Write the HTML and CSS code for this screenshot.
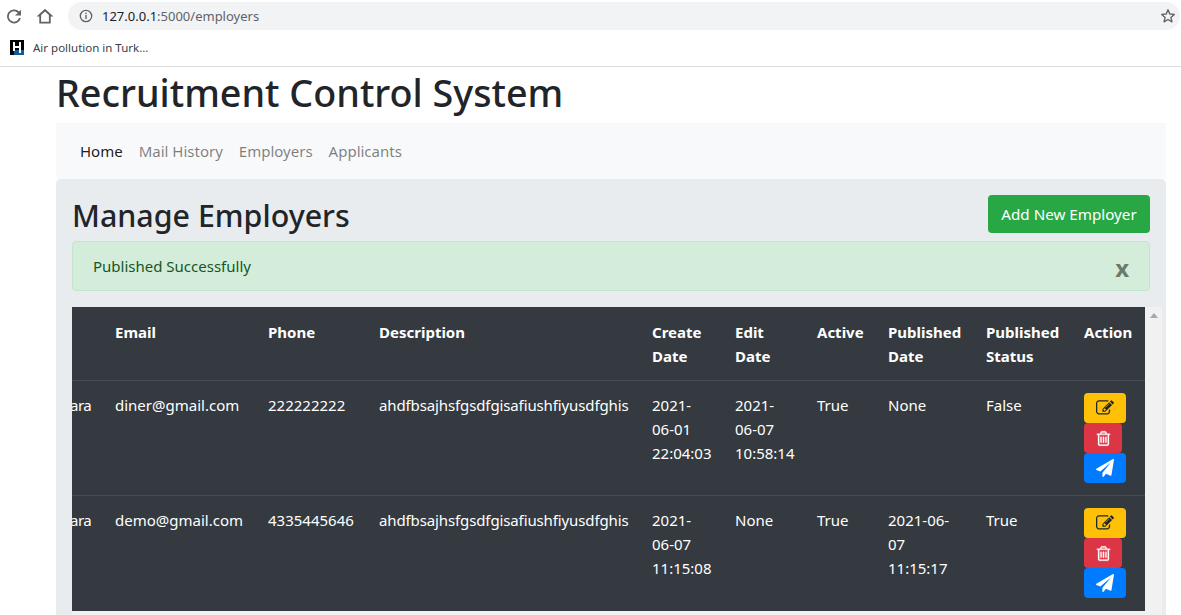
FILE: index.html
```html
<!DOCTYPE html>
<html lang="en">
<head>
<meta charset="utf-8">
<title>Recruitment Control System</title>
<link rel="stylesheet" href="styles.css">
</head>
<body>
<header class="chrome">
  <div class="toolbar">
    <svg class="tool-icon reload" viewBox="0 0 16 16"><path d="M13.200 3.600A7 7 0 1 0 14.900 10h-1.900a5.200 5.200 0 1 1-1.200-5.100L9 7.600h6V1.700z" fill="#5f6368"/></svg>
    <svg class="tool-icon home" viewBox="0 0 18 16"><path d="M9 .8 .6 8.500h2.700v7h11.400v-7h2.700zM5.100 13.700V7l3.900-3.500L12.900 7v6.700z" fill="#5f6368" fill-rule="evenodd"/></svg>
    <div class="omnibox">
      <svg class="info" viewBox="0 0 14 14"><circle cx="7" cy="7" r="5.700" fill="none" stroke="#5f6368" stroke-width="1.300"/><rect x="6.300" y="6" width="1.400" height="4" fill="#5f6368"/><rect x="6.300" y="3.700" width="1.400" height="1.400" fill="#5f6368"/></svg>
      <span class="url">127.0.0.1<span class="url-dim">:5000/employers</span></span>
      <svg class="star" viewBox="0 0 16 16"><path d="M8 1.800l1.800 4.200 4.500.4-3.400 3 1 4.400L8 11.500l-3.900 2.300 1-4.400-3.400-3 4.500-.4z" fill="none" stroke="#5f6368" stroke-width="1.400" stroke-linejoin="round"/></svg>
    </div>
  </div>
  <div class="bookmarks">
    <svg class="favicon" viewBox="0 0 14 15" shape-rendering="crispEdges"><rect width="14" height="15" fill="#000"/><rect x="4" y="10" width="10" height="5" fill="#0f5c9c"/><rect x="3" y="2" width="2" height="9" fill="#fff"/><rect x="9" y="2" width="2" height="11" fill="#fff"/><rect x="3" y="6" width="8" height="2" fill="#fff"/></svg>
    <span class="bookmark-label">Air pollution in Turk...</span>
  </div>
</header>

<main class="container">
  <h1 class="site-title">Recruitment Control System</h1>
  <nav class="navbar">
    <a class="nav-link active">Home</a>
    <a class="nav-link">Mail History</a>
    <a class="nav-link">Employers</a>
    <a class="nav-link">Applicants</a>
  </nav>
  <section class="jumbotron">
    <div class="page-head">
      <h2 class="page-title">Manage Employers</h2>
      <button class="btn btn-add">Add New Employer</button>
    </div>
    <div class="alert">
      <span>Published Successfully</span>
      <span class="alert-close">x</span>
    </div>
    <div class="table-scroll">
      <table class="table">
        <colgroup>
          <col class="c-addr"><col class="c-email"><col class="c-phone"><col class="c-desc"><col class="c-create"><col class="c-edit"><col class="c-active"><col class="c-pdate"><col class="c-pstatus"><col class="c-action">
        </colgroup>
        <thead>
          <tr><th class="clip"></th><th>Email</th><th>Phone</th><th>Description</th><th>Create Date</th><th>Edit Date</th><th>Active</th><th>Published Date</th><th>Published Status</th><th>Action</th></tr>
        </thead>
        <tbody>
          <tr>
            <td class="clip">ara</td><td>diner@gmail.com</td><td>222222222</td><td class="desc">ahdfbsajhsfgsdfgisafiushfiyusdfghis</td><td>2021-06-01 22:04:03</td><td>2021-06-07 10:58:14</td><td>True</td><td>None</td><td>False</td>
            <td>
              <button class="btn btn-icon btn-edit"><svg viewBox="0 0 1792 1792"><path d="M888 1184l116-116-152-152-116 116v56h96v96h56zm440-720q-16-16-33 1l-350 350q-17 17-1 33t33-1l350-350q17-17 1-33zm80 594v190q0 119-84.500 203.500t-203.500 84.500h-832q-119 0-203.500-84.500t-84.500-203.500v-832q0-119 84.500-203.500t203.500-84.500h832q63 0 117 25 15 7 18 23 3 17-9 29l-49 49q-14 14-32 8-23-6-45-6h-832q-66 0-113 47t-47 113v832q0 66 47 113t113 47h832q66 0 113-47t47-113v-126q0-13 9-22l64-64q15-15 35-7t20 29zm-96-738l288 288-672 672h-288v-288zm444 132l-92 92-288-288 92-92q28-28 68-28t68 28l152 152q28 28 28 68t-28 68z" fill="#212529"/></svg></button>
              <button class="btn btn-icon btn-del"><svg viewBox="0 0 1792 1792"><path d="M704 736v576q0 14-9 23t-23 9h-64q-14 0-23-9t-9-23v-576q0-14 9-23t23-9h64q14 0 23 9t9 23zm256 0v576q0 14-9 23t-23 9h-64q-14 0-23-9t-9-23v-576q0-14 9-23t23-9h64q14 0 23 9t9 23zm256 0v576q0 14-9 23t-23 9h-64q-14 0-23-9t-9-23v-576q0-14 9-23t23-9h64q14 0 23 9t9 23zm128 724v-948h-896v948q0 22 7 40.500t14.500 27 10.500 8.500h832q3 0 10.500-8.500t14.500-27 7-40.500zm-672-1076h448l-48-117q-7-9-17-11h-317q-10 2-17 11zm928 32v64q0 14-9 23t-23 9h-96v948q0 83-47 143.500t-113 60.500h-832q-66 0-113-58.500t-47-141.500v-952h-96q-14 0-23-9t-9-23v-64q0-14 9-23t23-9h309l70-167q15-37 54-63t79-26h320q40 0 79 26t54 63l70 167h309q14 0 23 9t9 23z" fill="#fff" stroke="#fff" stroke-width="30"/></svg></button>
              <button class="btn btn-icon btn-send"><svg viewBox="0 0 1792 1792"><path d="M1764 11q33 24 27 64l-256 1536q-5 29-32 45-14 8-31 8-11 0-24-5l-453-185-242 295q-18 23-49 23-13 0-22-4-19-7-30.500-23.500t-11.500-36.500v-349l864-1059-1069 925-395-162q-37-14-40-55-2-40 32-59l1664-960q15-9 32-9 20 0 36 11z" fill="#fff"/></svg></button>
            </td>
          </tr>
          <tr>
            <td class="clip">ara</td><td>demo@gmail.com</td><td>4335445646</td><td class="desc">ahdfbsajhsfgsdfgisafiushfiyusdfghis</td><td>2021-06-07 11:15:08</td><td>None</td><td>True</td><td>2021-06-07 11:15:17</td><td>True</td>
            <td>
              <button class="btn btn-icon btn-edit"><svg viewBox="0 0 1792 1792"><path d="M888 1184l116-116-152-152-116 116v56h96v96h56zm440-720q-16-16-33 1l-350 350q-17 17-1 33t33-1l350-350q17-17 1-33zm80 594v190q0 119-84.500 203.500t-203.500 84.500h-832q-119 0-203.500-84.500t-84.500-203.500v-832q0-119 84.500-203.500t203.500-84.500h832q63 0 117 25 15 7 18 23 3 17-9 29l-49 49q-14 14-32 8-23-6-45-6h-832q-66 0-113 47t-47 113v832q0 66 47 113t113 47h832q66 0 113-47t47-113v-126q0-13 9-22l64-64q15-15 35-7t20 29zm-96-738l288 288-672 672h-288v-288zm444 132l-92 92-288-288 92-92q28-28 68-28t68 28l152 152q28 28 28 68t-28 68z" fill="#212529"/></svg></button>
              <button class="btn btn-icon btn-del"><svg viewBox="0 0 1792 1792"><path d="M704 736v576q0 14-9 23t-23 9h-64q-14 0-23-9t-9-23v-576q0-14 9-23t23-9h64q14 0 23 9t9 23zm256 0v576q0 14-9 23t-23 9h-64q-14 0-23-9t-9-23v-576q0-14 9-23t23-9h64q14 0 23 9t9 23zm256 0v576q0 14-9 23t-23 9h-64q-14 0-23-9t-9-23v-576q0-14 9-23t23-9h64q14 0 23 9t9 23zm128 724v-948h-896v948q0 22 7 40.500t14.500 27 10.500 8.500h832q3 0 10.500-8.500t14.500-27 7-40.500zm-672-1076h448l-48-117q-7-9-17-11h-317q-10 2-17 11zm928 32v64q0 14-9 23t-23 9h-96v948q0 83-47 143.500t-113 60.500h-832q-66 0-113-58.500t-47-141.500v-952h-96q-14 0-23-9t-9-23v-64q0-14 9-23t23-9h309l70-167q15-37 54-63t79-26h320q40 0 79 26t54 63l70 167h309q14 0 23 9t9 23z" fill="#fff" stroke="#fff" stroke-width="30"/></svg></button>
              <button class="btn btn-icon btn-send"><svg viewBox="0 0 1792 1792"><path d="M1764 11q33 24 27 64l-256 1536q-5 29-32 45-14 8-31 8-11 0-24-5l-453-185-242 295q-18 23-49 23-13 0-22-4-19-7-30.500-23.500t-11.500-36.500v-349l864-1059-1069 925-395-162q-37-14-40-55-2-40 32-59l1664-960q15-9 32-9 20 0 36 11z" fill="#fff"/></svg></button>
            </td>
          </tr>
        </tbody>
      </table>
      <div class="v-scrollbar"><span class="arrow-up"></span></div>
    </div>
  </section>
</main>
</body>
</html>
```
FILE: styles.css
```css
* { box-sizing: border-box; }
html, body { height: 100%; overflow: hidden; }
body {
  margin: 0;
  background: #fff;
  color: #212529;
  font-family: "Noto Sans", "Open Sans", sans-serif;
  font-size: 15px;
  line-height: 24px;
}
.chrome { height: 67px; border-bottom: 1px solid #dadce0; background: #fff; }
.toolbar { height: 33px; display: flex; align-items: flex-start; }
.tool-icon { flex: none; margin-top: 8px; }
.reload { width: 16px; height: 16px; margin-left: 6px; }
.home { width: 18px; height: 16px; margin-left: 14px; }
.omnibox {
  margin: 2px 1px 0 14px;
  flex: 1;
  height: 28px;
  border-radius: 14px;
  background: #f1f3f4;
  display: flex;
  align-items: center;
  padding: 0 4px 0 11px;
}
.info { width: 14px; height: 14px; flex: none; }
.url { margin-left: 9px; font-size: 13px; color: #202124; flex: 1; line-height: 20px; }
.url-dim { color: #5f6368; }
.star { width: 16px; height: 16px; flex: none; }
.bookmarks { height: 33px; display: flex; align-items: center; padding: 0 0 4px 10px; }
.favicon { width: 14px; height: 15px; flex: none; }
.bookmark-label { margin-left: 9px; font-size: 11.500px; color: #3c4043; }

.container { width: 1110px; margin-left: 56px; }
.site-title { margin: 0; height: 56px; font-size: 37.700px; font-weight: 500; line-height: 52px; }
.navbar { height: 56px; background: #f8f9fa; display: flex; align-items: center; padding: 0 16px; font-size: 15px; }
.nav-link { padding: 0 8px; color: rgba(0,0,0,.5); }
.nav-link.active { color: rgba(0,0,0,.9); }
.jumbotron { height: 436px; padding: 16px 16px 0; background: #e9ecef; border-radius: 4.800px 4.800px 0 0; }
.page-head { height: 46px; display: flex; justify-content: space-between; align-items: flex-start; }
.page-title { margin: 0; font-size: 30.400px; font-weight: 500; line-height: 42px; }
.btn {
  display: block;
  border: 1px solid transparent;
  border-radius: 4px;
  font: inherit;
  color: #fff;
}
.btn-add { width: 162px; height: 38px; padding: 0; background: #28a745; font-size: 15.200px; }
.alert {
  height: 50px;
  margin: 0 0 16px;
  padding: 0 20px;
  background: #d4edda;
  border: 1px solid #c3e6cb;
  border-radius: 4px;
  color: #155724;
  display: flex;
  justify-content: space-between;
  align-items: center;
}
.alert-close { font-size: 24px; font-weight: 700; color: #6c7a6e; padding: 3px 0 0; }
.table-scroll { display: flex; align-items: flex-start; width: 1090px; height: 308px; background: #f1f1f1; }
.table {
  width: 1073px;
  flex: none;
  table-layout: fixed;
  border-collapse: collapse;
  background: #343a40;
  color: #fff;
}
.c-addr { width: 31px; }
.c-email { width: 153px; }
.c-phone { width: 111px; }
.c-desc { width: 273px; }
.c-create { width: 83px; }
.c-edit { width: 82px; }
.c-active { width: 71px; }
.c-pdate { width: 98px; }
.c-pstatus { width: 98px; }
.c-action { width: 73px; }
th, td { padding: 12px; text-align: left; vertical-align: top; border-top: 1px solid #454d55; font-weight: 400; }
th { font-weight: 700; border-top: 0; padding-top: 13px; }
thead tr { height: 73px; }
tbody tr { height: 115px; }
.table .clip { padding-left: 0; padding-right: 0; letter-spacing: -.5px; text-indent: -2px; overflow: hidden; }
.table .desc { letter-spacing: -.12px; }
.btn-icon { height: 30px; padding: 0; display: flex; align-items: center; justify-content: center; }
.btn-icon svg { height: 18px; width: 18px; }
.btn-edit { width: 42px; background: #ffc107; }
.btn-del { width: 38px; background: #dc3545; }
.btn-del svg { width: 17px; height: 17px; }
.btn-send { width: 42px; background: #007bff; }
.v-scrollbar { width: 17px; display: flex; justify-content: center; padding-top: 6px; }
.arrow-up { width: 0; height: 0; border: 4px solid transparent; border-top: 0; border-bottom: 5px solid #a8a8a8; }
```
